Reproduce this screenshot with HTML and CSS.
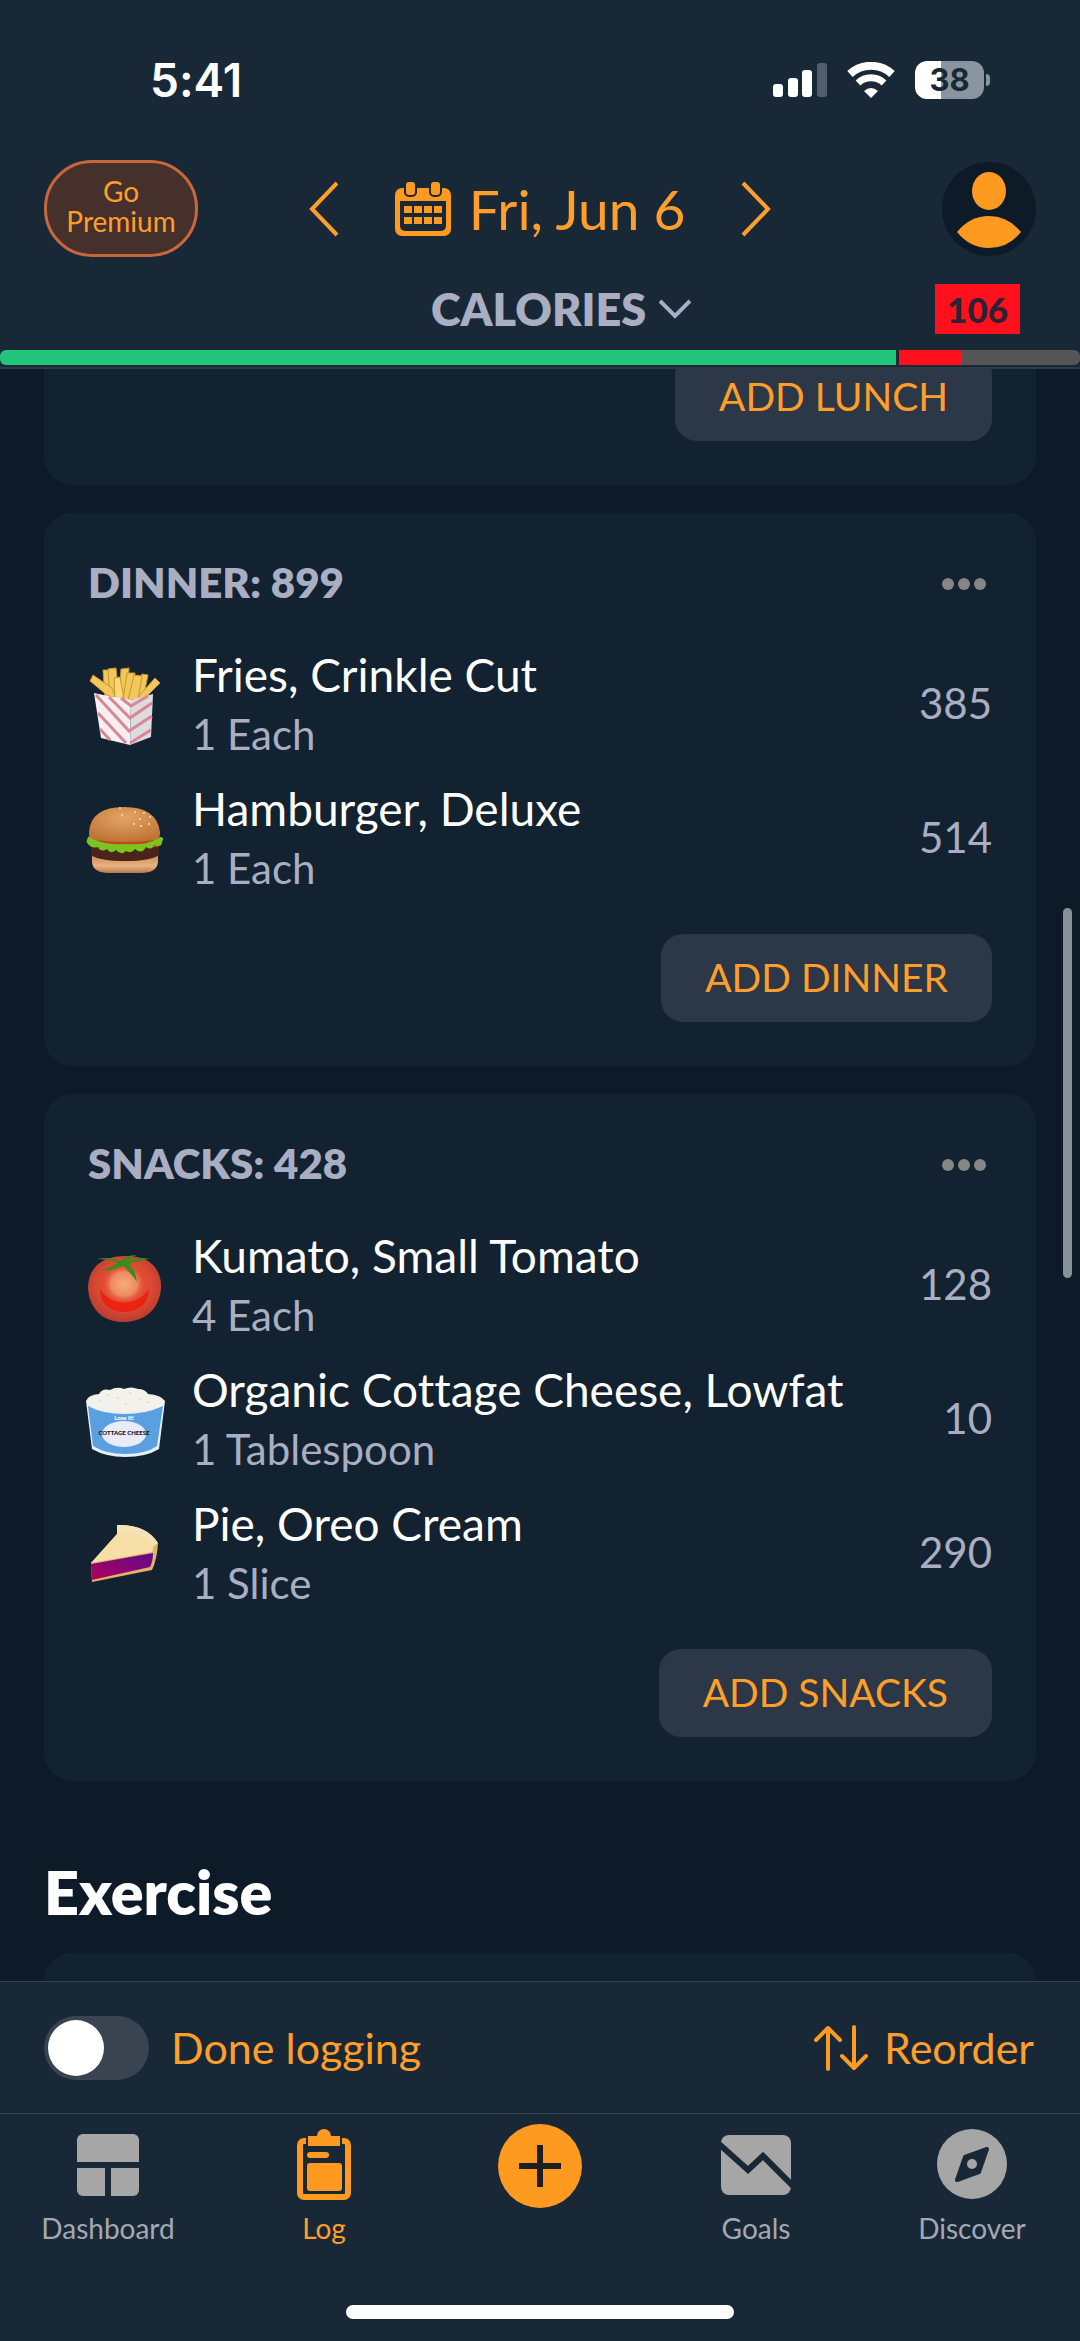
FILE: index.html
```
<!DOCTYPE html>
<html lang="en">
<head>
  <meta charset="UTF-8">
  <meta name="viewport" content="width=device-width, initial-scale=1.0">
  <title>Log</title>
  <link rel="stylesheet" href="styles.css">
</head>
<body>
  <header class="header">
    <div class="status-bar">
      <span class="time">5:41</span>
      <div class="status-icons">
        <svg width="54" height="34" viewBox="0 0 54 34" fill="#fff">
          <rect x="0" y="21" width="10" height="13" rx="3"/>
          <rect x="15" y="15" width="10" height="19" rx="3"/>
          <rect x="29" y="7" width="10" height="27" rx="3"/>
          <rect x="44" y="0" width="10" height="34" rx="3" opacity="0.25"/>
        </svg>
        <svg width="48" height="36" viewBox="0 0 48 36" fill="none" stroke="#fff" stroke-width="8">
          <path d="M3 12 A31 31 0 0 1 45 12"/>
          <path d="M11 21 A19 19 0 0 1 37 21" stroke-width="7"/>
          <path d="M17 29 Q24 23 31 29 L24 36 Z" fill="#fff" stroke="none"/>
        </svg>
        <div class="battery"><span>38</span></div>
      </div>
    </div>

    <div class="top-row">
      <button class="premium">Go<br>Premium</button>
      <div class="date-nav">
        <button class="icon-button" aria-label="Previous day">
          <svg width="30" height="56" viewBox="0 0 30 56" fill="none" stroke="#ff9f2a" stroke-width="4"><path d="M28 2 L3 28 L28 54"/></svg>
        </button>
        <button class="date">
          <svg width="56" height="54" viewBox="0 0 56 54">
            <rect x="0" y="6" width="56" height="48" rx="7" fill="#ff9a20"/>
            <path d="M5 19 H51 V44 a5 5 0 0 1 -5 5 H10 a5 5 0 0 1 -5 -5 Z" fill="#192837"/>
            <g fill="#ff9a20" stroke="#192837" stroke-width="2">
              <rect x="10" y="-1" width="11" height="15" rx="4"/>
              <rect x="35" y="-1" width="11" height="15" rx="4"/>
            </g>
            <g fill="#ff9a20">
              <rect x="9" y="24" width="8" height="7"/><rect x="19" y="24" width="8" height="7"/><rect x="29" y="24" width="8" height="7"/><rect x="39" y="24" width="8" height="7"/>
              <rect x="9" y="35" width="8" height="7"/><rect x="19" y="35" width="8" height="7"/><rect x="29" y="35" width="8" height="7"/><rect x="39" y="35" width="8" height="7"/>
            </g>
          </svg>
          Fri, Jun 6
        </button>
        <button class="icon-button" aria-label="Next day">
          <svg width="30" height="56" viewBox="0 0 30 56" fill="none" stroke="#ff9f2a" stroke-width="4"><path d="M2 2 L27 28 L2 54"/></svg>
        </button>
      </div>
      <button class="icon-button avatar" aria-label="Profile">
        <svg width="94" height="94" viewBox="0 0 94 94">
          <circle cx="47" cy="47" r="47" fill="#0d1a28"/>
          <g fill="#ff9a20">
            <ellipse cx="47" cy="29" rx="17" ry="19"/>
            <path d="M15 70 Q28 54 47 54 Q66 54 79 70 Q66 86 47 86 Q28 86 15 70 Z"/>
          </g>
        </svg>
      </button>
    </div>

    <div class="calories-row">
      <div class="picker">
        <select aria-label="Nutrient">
          <option>CALORIES</option>
        </select>
        <svg width="32" height="20" viewBox="0 0 32 20" fill="none" stroke="#a9aec2" stroke-width="4"><path d="M1 2 L16 17 L31 2"/></svg>
      </div>
      <span class="over">106</span>
    </div>

    <div class="progress">
      <div class="eaten"></div>
      <div class="excess"></div>
    </div>
  </header>

  <main class="content">
    <section class="card lunch">
      <button class="add">ADD LUNCH</button>
    </section>

    <section class="card">
      <div class="card-head">
        <h3>DINNER: 899</h3>
        <button class="icon-button more" aria-label="Dinner options">
          <svg width="44" height="12" viewBox="0 0 44 12" fill="#868686"><circle cx="6" cy="6" r="6"/><circle cx="22" cy="6" r="6"/><circle cx="38" cy="6" r="6"/></svg>
        </button>
      </div>
      <ul class="foods">
        <li>
          <svg class="food-icon" viewBox="0 0 76 76">
            <g fill="#f2c75c" stroke="#c9962f" stroke-width="1">
              <path d="M15 5 L21 5 L23 34 L17 34 Z"/>
              <path d="M33 4 L41 3 L39 35 L31 35 Z"/>
              <path d="M20 4 L28 3 L31 34 L22 34 Z"/>
              <path d="M54 9 L60 10 L55 34 L46 34 Z"/>
              <path d="M39 8 L47 8 L43 35 L35 35 Z"/>
              <path d="M46 10 L54 11 L50 35 L40 35 Z"/>
              <path d="M26 13 L32 12 L36 34 L27 34 Z" fill="#ffd976"/>
              <path d="M5 10 L24 23 L27 32 L20 31 L2 16 Z"/>
              <path d="M67 13 L72 18 L57 33 L50 32 Z"/>
            </g>
            <path d="M6 28 L20 31 Q36 33 43 35 L42 80 L13 73 Z" fill="#f5eff2"/>
            <path d="M43 35 L65 29 L63 72 L42 80 Z" fill="#dcdcdf"/>
            <g fill="none" stroke="#d98695" stroke-width="3">
              <path d="M8 30 L41 66 L64 51"/>
              <path d="M21 32 L42 53 L64 38"/>
              <path d="M33 33 L43 41 L60 31"/>
              <path d="M10 48 L38 78"/>
              <path d="M12 64 L22 75"/>
              <path d="M42 78 L63 65"/>
            </g>
          </svg>
          <div class="food-text">
            <p class="name">Fries, Crinkle Cut</p>
            <p class="amount">1 Each</p>
          </div>
          <span class="value">385</span>
        </li>
        <li>
          <svg class="food-icon" viewBox="0 0 76 76">
            <defs>
              <radialGradient id="bun" cx="0.5" cy="0.3" r="0.7"><stop offset="0" stop-color="#e5a566"/><stop offset="1" stop-color="#bd7535"/></radialGradient>
              <linearGradient id="bunBottom" x1="0" y1="0" x2="0" y2="1"><stop offset="0" stop-color="#c98a55"/><stop offset="0.6" stop-color="#e8b282"/><stop offset="1" stop-color="#b97a48"/></linearGradient>
            </defs>
            <path d="M4 56 H70 V63 Q69 74 53 74 H21 Q5 74 4 63 Z" fill="url(#bunBottom)"/>
            <path d="M3 47 H71 V56 Q62 62 37 62 Q12 62 3 56 Z" fill="#4a2418"/>
            <path d="M4 38 H70 V48 H4 Z" fill="#c9431c"/>
            <path d="M1 37 Q-3 42 0 45 Q4 50 10 48 Q13 54 19 50 Q22 56 28 51 Q33 57 38 52 Q44 55 47 50 Q54 56 58 48 Q64 52 66 46 Q74 49 74 43 Q77 38 72 38 Q60 47 37 45 Q14 47 1 37 Z" fill="#79c51f"/>
            <path d="M1 33 Q3 8 36 8 Q69 8 72 33 Q73 40 66 41 Q37 45 8 41 Q0 40 1 33 Z" fill="url(#bun)"/>
            <g fill="#f5dfb8">
              <circle cx="32" cy="9" r="1"/><circle cx="47" cy="13" r="1"/><circle cx="56" cy="14" r="1"/><circle cx="62" cy="18" r="1"/><circle cx="52" cy="20" r="1"/><circle cx="46" cy="25" r="1"/><circle cx="53" cy="27" r="1"/><circle cx="61" cy="25" r="1"/><circle cx="34" cy="16" r="1"/>
            </g>
          </svg>
          <div class="food-text">
            <p class="name">Hamburger, Deluxe</p>
            <p class="amount">1 Each</p>
          </div>
          <span class="value">514</span>
        </li>
      </ul>
      <button class="add">ADD DINNER</button>
    </section>

    <section class="card">
      <div class="card-head">
        <h3>SNACKS: 428</h3>
        <button class="icon-button more" aria-label="Snacks options">
          <svg width="44" height="12" viewBox="0 0 44 12" fill="#868686"><circle cx="6" cy="6" r="6"/><circle cx="22" cy="6" r="6"/><circle cx="38" cy="6" r="6"/></svg>
        </button>
      </div>
      <ul class="foods">
        <li>
          <svg class="food-icon" viewBox="0 0 76 76">
            <defs>
              <radialGradient id="skin" cx="0.5" cy="0.45" r="0.6"><stop offset="0" stop-color="#f0502f"/><stop offset="0.6" stop-color="#dc4a34"/><stop offset="1" stop-color="#b03a2c"/></radialGradient>
              <radialGradient id="shine"><stop offset="0" stop-color="#f9ab7c"/><stop offset="0.6" stop-color="#ee8a62"/><stop offset="1" stop-color="#e5482d" stop-opacity="0"/></radialGradient>
            </defs>
            <path d="M37 10 Q56 9 66 20 Q74 30 73 43 Q71 62 56 71 Q46 76 36 76 Q23 76 14 70 Q1 60 0 42 Q0 28 9 19 Q19 10 37 10 Z" fill="url(#skin)"/>
            <path d="M12 43 Q12 65 36 66 Q60 65 61 43 Q52 56 36 56 Q20 56 12 43 Z" fill="#ee1c0a" opacity="0.85"/>
            <ellipse cx="36" cy="38" rx="22" ry="20" fill="url(#shine)"/>
            <path d="M9 13 Q22 10 33 15 Q37 9 49 9 Q42 12 40 15 Q52 10 62 13 Q50 14 41 18 Q48 25 49 36 Q42 26 35 20 Q25 25 13 25 Q23 21 30 17 Q20 13 9 13 Z" fill="#3f8a1c"/>
          </svg>
          <div class="food-text">
            <p class="name">Kumato, Small Tomato</p>
            <p class="amount">4 Each</p>
          </div>
          <span class="value">128</span>
        </li>
        <li>
          <svg class="food-icon" viewBox="0 0 76 76">
            <path d="M-2 21 L4 69 Q18 77 37 77 Q58 77 71 69 L77 21 Z" fill="#e6effa"/>
            <path d="M0 26 L5 66 Q18 74 37 74 Q58 74 69 66 L75 26 Q58 34 37 34 Q14 34 0 26 Z" fill="#5a9fe0"/>
            <path d="M-2 21 Q0 15 11 14 Q14 8 22 10 Q29 6 36 9 Q43 6 50 9 Q57 9 60 14 Q73 15 77 21 Q73 32 37 32 Q1 31 -2 21 Z" fill="#f3f1ec"/>
            <g fill="#d9d6cf"><circle cx="20" cy="15" r="1"/><circle cx="30" cy="18" r="1"/><circle cx="42" cy="13" r="1"/><circle cx="52" cy="19" r="1"/><circle cx="60" cy="22" r="1"/><circle cx="12" cy="21" r="1"/><circle cx="38" cy="24" r="1"/></g>
            <ellipse cx="36" cy="54" rx="22" ry="13" fill="#e8ecf8"/>
            <text class="brand" x="36" y="40" text-anchor="middle">Lose It!</text>
            <text class="product" x="36" y="55" text-anchor="middle">COTTAGE CHEESE</text>
          </svg>
          <div class="food-text">
            <p class="name">Organic Cottage Cheese, Lowfat</p>
            <p class="amount">1 Tablespoon</p>
          </div>
          <span class="value">10</span>
        </li>
        <li>
          <svg class="food-icon" viewBox="0 0 76 76">
            <defs>
              <linearGradient id="filling" x1="0" y1="1" x2="1" y2="0"><stop offset="0" stop-color="#b3005e"/><stop offset="1" stop-color="#5e0a8a"/></linearGradient>
            </defs>
            <path d="M29 11 Q58 10 70 29 Q69 46 64 56 L4 68 L3 49 L29 20 Z" fill="#dfb36a"/>
            <path d="M29 20 L29 13 Q56 13 66 31 L64 38 L3 49 Z" fill="#f6dfa6"/>
            <path d="M29 11 Q58 10 70 29 L66 32 Q55 17 29 17 Z" fill="#f4e3b8"/>
            <path d="M3 50 L65 39 Q65 47 62 53 L4 66 Z" fill="url(#filling)"/>
          </svg>
          <div class="food-text">
            <p class="name">Pie, Oreo Cream</p>
            <p class="amount">1 Slice</p>
          </div>
          <span class="value">290</span>
        </li>
      </ul>
      <button class="add">ADD SNACKS</button>
    </section>

    <h2>Exercise</h2>
    <section class="card"></section>

    <div class="scrollbar"></div>
  </main>

  <footer class="footer">
    <div class="actions">
      <label class="done" for="done"><input type="checkbox" id="done">Done logging</label>
      <button class="reorder">
        <svg width="54" height="46" viewBox="0 0 54 46" fill="none" stroke="#ff9a20" stroke-width="4" stroke-linecap="round" stroke-linejoin="round">
          <path d="M14 44 V3 M2 15 L14 3 L26 15"/>
          <path d="M40 2 V43 M28 31 L40 43 L52 31"/>
        </svg>
        Reorder
      </button>
    </div>
    <nav class="tabs">
      <a href="#">
        <svg width="62" height="84" viewBox="0 0 62 84" fill="#a6a6a6">
          <path d="M6 10 H56 a6 6 0 0 1 6 6 V38 H0 V16 a6 6 0 0 1 6 -6 Z"/>
          <path d="M0 44 H28 V72 H6 a6 6 0 0 1 -6 -6 Z"/>
          <path d="M34 44 H62 V66 a6 6 0 0 1 -6 6 H34 Z"/>
        </svg>
        Dashboard
      </a>
      <a href="#" class="active">
        <svg width="54" height="84" viewBox="0 0 54 84" fill="#ff9a20">
          <rect x="3" y="17" width="48" height="56" rx="4" fill="none" stroke="#ff9a20" stroke-width="6"/>
          <path d="M9 12 H45 V23 H9 Z" fill="#192837"/>
          <path d="M11 12 H20 a7 7 0 0 1 14 0 H43 V22 H11 Z"/>
          <rect x="10" y="28" width="22" height="6" rx="3"/>
          <rect x="10" y="39" width="35" height="28" rx="3"/>
        </svg>
        Log
      </a>
      <button class="icon-button plus" aria-label="Add">
        <svg width="84" height="84" viewBox="0 0 84 84"><circle cx="42" cy="42" r="42" fill="#ff9a20"/><path d="M42 21 V63 M21 42 H63" stroke="#1b1e22" stroke-width="6"/></svg>
      </button>
      <a href="#">
        <svg width="70" height="84" viewBox="0 0 70 84">
          <rect x="0" y="11" width="70" height="60" rx="8" fill="#a6a6a6"/>
          <path d="M-3 19 L27 46 L42 32 L74 64" fill="none" stroke="#192837" stroke-width="6"/>
        </svg>
        Goals
      </a>
      <a href="#">
        <svg width="70" height="84" viewBox="0 0 70 84">
          <circle cx="35" cy="40" r="35" fill="#a6a6a6"/>
          <path d="M28 33 L50 25 L42 48 L20 56 Z" fill="#192837" stroke="#192837" stroke-width="4" stroke-linejoin="round"/>
          <circle cx="35" cy="40" r="5" fill="#a6a6a6"/>
        </svg>
        Discover
      </a>
    </nav>
    <div class="home-indicator"></div>
  </footer>
</body>
</html>
```
FILE: styles.css
```
* {
  box-sizing: border-box;
}

body {
  margin: 0;
  height: 100vh;
  display: flex;
  flex-direction: column;
  background: #0d1a28;
  color: #fff;
  font-family: Lato, "Liberation Sans", sans-serif;
  font-variant-ligatures: none;
}

button {
  border: none;
  padding: 0;
  background: none;
  color: #ff9f2a;
  font-family: inherit;
  cursor: pointer;
}

svg {
  display: block;
  flex-shrink: 0;
}

h2, h3, p, ul {
  margin: 0;
  padding: 0;
}

/* Header */
.header {
  flex-shrink: 0;
  background: #192837;
  border-bottom: 2px solid #2b3948;
}

.status-bar {
  display: flex;
  justify-content: space-between;
  align-items: center;
  height: 160px;
  padding: 0 96px 0 150px;
}

.time {
  font-family: Inter, sans-serif;
  font-size: 46px;
  font-weight: 600;
}

.status-icons {
  display: flex;
  align-items: center;
  gap: 20px;
}

.battery {
  position: relative;
  width: 69px;
  height: 38px;
  border-radius: 12px;
  background: linear-gradient(90deg, #fff 38%, #8b95a0 38%);
  color: #192837;
  font-family: Inter, sans-serif;
  font-size: 31px;
  font-weight: 700;
  line-height: 38px;
  text-align: center;
}

.battery::after {
  content: '';
  position: absolute;
  left: 71px;
  top: 13px;
  width: 4px;
  height: 12px;
  border-radius: 0 4px 4px 0;
  background: #8b95a0;
}

.top-row {
  display: grid;
  grid-template-columns: 1fr auto 1fr;
  align-items: center;
  padding: 0 44px;
}

.premium {
  justify-self: start;
  width: 154px;
  height: 97px;
  padding-bottom: 6px;
  border: 3px solid #c8683a;
  border-radius: 48px;
  background: #45302c;
  font-size: 28px;
  line-height: 30px;
}

.date-nav {
  display: flex;
  align-items: center;
  gap: 56px;
}

.date {
  display: flex;
  align-items: center;
  gap: 18px;
  font-size: 55px;
  line-height: 64px;
}

.avatar {
  justify-self: end;
}

.calories-row {
  display: grid;
  grid-template-columns: 1fr auto 1fr;
  align-items: center;
  padding: 27px 60px 16px 102px;
}

.picker {
  grid-column: 2;
  display: flex;
  align-items: center;
  gap: 12px;
}

.picker select {
  appearance: none;
  border: none;
  padding: 0;
  background: none;
  color: #a9aec2;
  font-family: inherit;
  font-size: 45px;
  font-weight: 800;
  line-height: 50px;
}

.over {
  justify-self: end;
  padding: 0 12px;
  background: #ff101c;
  color: #2b2233;
  font-size: 35px;
  font-weight: 900;
  line-height: 50px;
}

.progress {
  display: flex;
  gap: 3px;
  height: 15px;
  margin-bottom: 2px;
  border-radius: 6px;
  overflow: hidden;
}

.eaten {
  width: 83%;
  background: #22c47a;
}

.excess {
  flex: 1;
  background: linear-gradient(90deg, #ff101c 35%, #555 35%);
}

/* Meals */
.content {
  position: relative;
  flex: 1;
  min-height: 0;
  overflow: hidden;
  padding: 0 44px;
}

.card {
  display: flex;
  flex-direction: column;
  margin-bottom: 28px;
  padding: 44px;
  border-radius: 28px;
  background: #132231;
}

/* list is scrolled, the top of the lunch card is under the header */
.lunch {
  margin-top: -60px;
}

.card-head {
  display: flex;
  justify-content: space-between;
  align-items: center;
  margin-bottom: 37px;
}

h3 {
  color: #a9aec2;
  font-size: 42px;
  font-weight: 800;
  line-height: 50px;
}

.more {
  padding: 10px 6px 6px;
}

.foods {
  display: flex;
  flex-direction: column;
  gap: 16px;
  margin-bottom: 38px;
  list-style: none;
}

.foods li {
  display: flex;
  align-items: center;
  gap: 28px;
}

.food-icon {
  width: 76px;
  height: 76px;
  overflow: visible;
}

.brand {
  fill: #fff;
  font-size: 6px;
  font-weight: 900;
}

.product {
  fill: #111;
  font-size: 6px;
  font-weight: 900;
}

.food-text {
  flex: 1;
}

.name {
  font-size: 46px;
  line-height: 62px;
}

.amount {
  color: #a9aec2;
  font-size: 42px;
  line-height: 56px;
}

.value {
  color: #a9aec2;
  font-size: 42px;
}

.add {
  align-self: flex-end;
  height: 88px;
  padding: 0 44px 3px;
  border-radius: 22px;
  background: #2c3847;
  font-size: 39px;
}

h2 {
  margin: 75px 0 25px;
  font-size: 61px;
  font-weight: 800;
  line-height: 72px;
}

.scrollbar {
  position: absolute;
  top: 539px;
  right: 8px;
  width: 9px;
  height: 370px;
  border-radius: 5px;
  background: #87919a;
}

/* Footer */
.footer {
  flex-shrink: 0;
  padding-bottom: 22px;
  background: #192837;
  border-top: 1px solid #36424f;
}

.actions {
  display: flex;
  justify-content: space-between;
  align-items: center;
  height: 132px;
  padding: 0 46px 0 44px;
  border-bottom: 1px solid #36424f;
  color: #ff9f2a;
  font-size: 43px;
}

.done {
  display: flex;
  align-items: center;
  gap: 22px;
}

.done input {
  appearance: none;
  width: 105px;
  height: 64px;
  margin: 0;
  padding: 4px;
  border-radius: 32px;
  background: #3a4350;
}

.done input::before {
  content: '';
  display: block;
  width: 56px;
  height: 56px;
  border-radius: 50%;
  background: #fff;
}

.done input:checked {
  background: #22c47a;
}

.done input:checked::before {
  margin-left: auto;
}

.reorder {
  display: flex;
  align-items: center;
  gap: 16px;
  font-size: 43px;
}

.tabs {
  display: flex;
  align-items: flex-start;
  padding-top: 10px;
  margin-bottom: 60px;
}

.tabs a,
.plus {
  flex: 1;
  display: flex;
  flex-direction: column;
  align-items: center;
  gap: 3px;
  color: #a3a9b3;
  font-size: 28px;
  line-height: 34px;
  text-decoration: none;
}

.tabs .active {
  color: #ff9f2a;
}

.home-indicator {
  width: 36%;
  height: 14px;
  margin: 0 auto;
  border-radius: 7px;
  background: #fff;
}
```
